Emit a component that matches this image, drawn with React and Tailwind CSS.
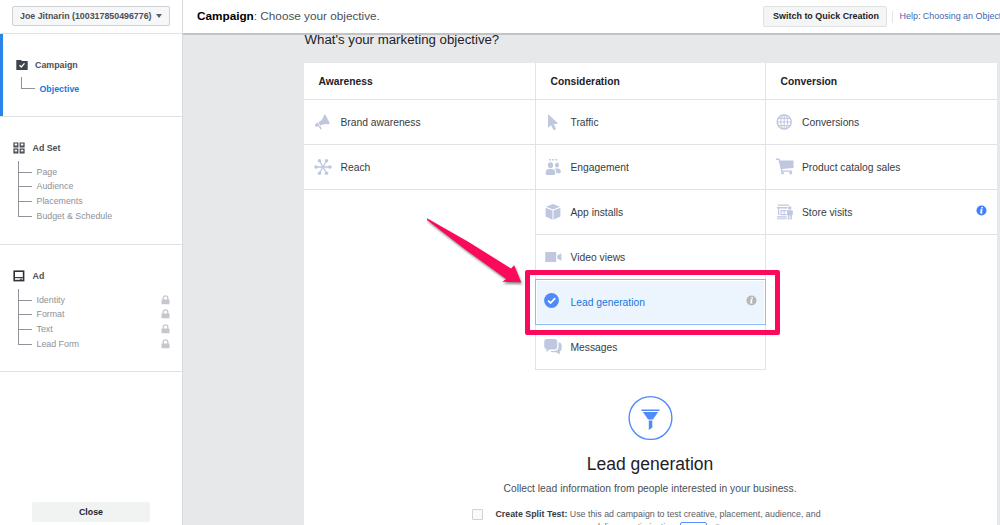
import React from 'react';

const AwarenessIcon = () => (
  <svg width="17" height="17" viewBox="0 0 17 17" className="text-[#bfc8df]" fill="currentColor">
    <path d="M10.6 0.6 Q11.6 0.8 12.2 2.2 L15.6 8.8 Q15.8 10.4 14 10.2 Q10.5 9.2 6.3 11.6 L4.3 8.2 Q8.8 5.8 9.8 1.4 Q10 0.7 10.6 0.6 Z" />
    <path d="M3.8 8.5 L5.7 11.7 L3.4 12.8 Q1.7 13.1 1 11.8 Q0.7 10.4 1.9 9.7 Z" />
    <path d="M4.6 12.6 L6.2 12 L7.8 14.8 L6.4 15.6 Z" />
  </svg>
);

const ReachIcon = () => (
  <svg width="18" height="18" viewBox="0 0 18 18" className="text-[#bfc8df]" fill="currentColor">
    <g stroke="currentColor" strokeWidth="1.3">
      <path d="M2 9H16M5.5 2.8L12.5 15.2M12.5 2.8L5.5 15.2" />
    </g>
    <circle cx="2" cy="9" r="1.8" />
    <circle cx="16" cy="9" r="1.8" />
    <circle cx="5.5" cy="2.8" r="1.8" />
    <circle cx="12.5" cy="2.8" r="1.8" />
    <circle cx="5.5" cy="15.2" r="1.8" />
    <circle cx="12.5" cy="15.2" r="1.8" />
  </svg>
);

const TrafficIcon = () => (
  <svg width="18" height="18" viewBox="0 0 18 18" className="text-[#bfc8df]" fill="currentColor">
    <path d="M4 1 V14.8 L7.2 12.2 L9.6 17.3 L12.1 16.2 L9.8 11.2 L14.2 10.6 Z" />
  </svg>
);

const EngagementIcon = () => (
  <svg width="18" height="18" viewBox="0 0 18 18" className="text-[#bfc8df]" fill="currentColor">
    <path d="M5 1h1.8v1.6H5zM8.2 1H10v1.6H8.2zM11.4 1h1.8v1.6h-1.8z" />
    <ellipse cx="6.5" cy="7.2" rx="2.6" ry="3" />
    <ellipse cx="13" cy="7" rx="2" ry="2.5" />
    <path d="M1.6 15.4 Q1.6 11 5 11 H8 Q11.4 11 11.4 15.4 Q11.4 17 9.6 17 H3.4 Q1.6 17 1.6 15.4 Z" />
    <path d="M10.6 10.6 H14 Q16.8 10.8 16.8 14 Q16.8 15.2 15.6 15.2 H12.4 Q12.4 12.4 10.6 10.6 Z" />
  </svg>
);

const AppIcon = () => (
  <svg width="18" height="18" viewBox="0 0 18 18" className="text-[#bfc8df]" fill="currentColor">
    <path d="M9 1.1 L16 3.8 L9 6.6 L2 3.8 Z" />
    <path d="M1.6 4.8 L8.5 7.6 V16.8 L1.6 13.6 Z" />
    <path d="M16.4 4.8 L9.5 7.6 V16.8 L16.4 13.6 Z" />
  </svg>
);

const VideoIcon = () => (
  <svg width="18" height="18" viewBox="0 0 18 18" className="text-[#bfc8df]" fill="currentColor">
    <rect x="1.2" y="4" width="11" height="10" rx="0.6" />
    <path d="M17.4 5.2 V12.8 L13.3 10.4 V7.6 Z" />
  </svg>
);

const CheckIcon = () => (
  <svg width="18" height="18" viewBox="0 0 18 18">
    <circle cx="7.5" cy="7.5" r="7.4" fill="#4f8af8" />
    <path d="M4.1 7.6 L6.6 10 L11.2 5.2" stroke="#fff" strokeWidth="1.8" fill="none" />
  </svg>
);

const MessagesIcon = () => (
  <svg width="18" height="18" viewBox="0 0 18 18" className="text-[#bfc8df]" fill="currentColor">
    <path d="M3 1 H10.4 Q13.2 1.2 13.2 4 V8.8 Q13 11.6 10.2 11.6 H5.6 L2.4 14 V11.2 Q0.2 10.6 0.2 8.4 V4 Q0.2 1.2 3 1 Z" />
    <path d="M14.6 4.2 Q17.6 4.8 17.6 7.4 V10.8 Q17.6 13 15.8 13.6 V16.6 L12.2 14.2 H8.6 Q7 14.2 6.4 13 H10.4 Q14.6 12.6 14.6 8.8 Z" />
  </svg>
);

const ConversionsIcon = () => (
  <svg width="18" height="18" viewBox="0 0 18 18" fill="none" className="text-[#bfc8df]" stroke="currentColor">
    <circle cx="8.2" cy="9" r="7" strokeWidth="1.5" />
    <ellipse cx="8.2" cy="9" rx="3.4" ry="7" />
    <path d="M8.2 2V16M1.2 9H15.2M2.4 5.4H14M2.4 12.6H14" />
  </svg>
);

const CartIcon = () => (
  <svg width="19" height="18" viewBox="0.5 0 19 18" className="text-[#bfc8df]" fill="currentColor">
    <path d="M0.5 0.6 H4 L4.6 2.4 H18 V10 L6.6 11 L7 12.4 H16.8 V13.8 H5.8 L3 2 H0.5 Z" />
    <circle cx="7" cy="15" r="1.4" />
    <circle cx="15.2" cy="15" r="1.4" />
  </svg>
);

const StoreIcon = () => (
  <svg width="18" height="18" viewBox="0 0 18 18" className="text-[#bfc8df]" fill="currentColor">
    <path d="M2 1.4H13V2.8H2zM1 4H11.6V5.6H1zM2 5.6H3.2V12H2zM4.4 7H10.6V8.2H5.6V11H10.6V12.2H4.4zM7.6 7H8.6V12H7.6zM1 13.2H10.8V14.4H1zM1 15.2H10.8V16.2H1z" />
    <circle cx="13.8" cy="5" r="1.7" />
    <path d="M11.4 7.2H16.2L16.8 8V12H15.8V16.6H14.3V12.6H13.4V16.6H11.9V12H11V8z" />
  </svg>
);

const InfoIcon = ({ color }) => (
  <svg width="11" height="11" viewBox="0 0 11 11">
    <circle cx="5.5" cy="5.5" r="5" fill={color} />
    <path d="M5.4 2.1H6.9V3.4H5.1zM4.3 4.3H6.6L5.9 7.6H6.5V8.6H4.1L4.7 5.3H4.1z" fill="#fff" />
  </svg>
);

const LockIcon = () => (
  <svg width="9" height="10" viewBox="0 0 9 10">
    <path d="M2.2 5V2.9Q2.2 0.9 4.5 0.9T6.8 2.9V5" fill="none" stroke="#c4c7cd" strokeWidth="1.3" />
    <rect x="0.5" y="4.4" width="8" height="4.8" rx="0.5" fill="#c4c7cd" />
  </svg>
);

const CampaignIcon = () => (
  <svg width="12" height="10" viewBox="0 0 12 10">
    <path d="M0.3 0H5L6 1H11.7V10H0.3z" fill="#3e434d" />
    <path d="M3.5 5.2L5.3 7L8.5 3.4" stroke="#fff" strokeWidth="1.3" fill="none" />
  </svg>
);

const AdSetIcon = () => (
  <svg width="12" height="12" viewBox="0 0 12 12" fill="none" stroke="#3e434d" strokeWidth="1.2">
    <path d="M1 1H4.8V4.8H1zM7.2 1H11V4.8H7.2zM1 7.2H4.8V11H1zM7.2 7.2H11V11H7.2z" />
    <path d="M1 4H4.8M7.2 4H11M1 10.2H4.8M7.2 10.2H11" />
  </svg>
);

const AdIcon = () => (
  <svg width="12" height="12" viewBox="0 0 12 12">
    <rect x="1.2" y="1.2" width="9.4" height="9.4" fill="none" stroke="#2f333c" strokeWidth="1.6" />
    <path d="M1.5 7.6H10.5" stroke="#2f333c" strokeWidth="1.1" />
    <path d="M6.8 9.2H9" stroke="#2f333c" strokeWidth="1" />
  </svg>
);

const columns = [
  {
    title: 'Awareness',
    pad: 'pl-[10px]',
    items: [
      { label: 'Brand awareness', icon: AwarenessIcon },
      { label: 'Reach', icon: ReachIcon }
    ]
  },
  {
    title: 'Consideration',
    className: 'border-x border-[#e1e3e7]',
    pad: 'pl-[8px]',
    items: [
      { label: 'Traffic', icon: TrafficIcon },
      { label: 'Engagement', icon: EngagementIcon },
      { label: 'App installs', icon: AppIcon },
      { label: 'Video views', icon: VideoIcon },
      { label: 'Lead generation', icon: CheckIcon, selected: true, info: '#b5b7ba' },
      { label: 'Messages', icon: MessagesIcon }
    ]
  },
  {
    title: 'Conversion',
    pad: 'pl-[9.5px]',
    items: [
      { label: 'Conversions', icon: ConversionsIcon },
      { label: 'Product catalog sales', icon: CartIcon },
      { label: 'Store visits', icon: StoreIcon, info: '#4080ff' }
    ]
  }
];

const Tree = ({ items, locked }) => (
  <ul className="ml-[18px] mt-[4px]">
    {items.map((item, i) => (
      <li key={item} className="flex h-[14.7px] items-end">
        <span className={`w-[14px] border-b border-l border-[#909398] ${i === 0 ? 'h-[12px]' : 'h-[15px]'}`} />
        <span className="ml-[4.5px] flex-1 translate-y-[5px] text-[8.84px] leading-[11px] text-[#8d9199]">{item}</span>
        {locked && (
          <span className="mr-[12.5px] translate-y-[4px]">
            <LockIcon />
          </span>
        )}
      </li>
    ))}
  </ul>
);

const Sidebar = () => (
  <aside className="flex h-full w-[183px] shrink-0 flex-col border-r border-[#d8dade] bg-white">
    <div className="h-[34px] border-b border-[#dfe1e4] pl-3 pt-[6px]">
      <button className="flex h-[20px] w-[158px] items-center rounded-[2px] border border-[#ced0d4] bg-[#f6f7f9] pl-[7px] text-[8.84px] font-bold text-[#4b4f56]">
        <span className="translate-y-[0.5px]">Joe Jitnarin (100317850496776)</span>
        <svg className="ml-[4px]" width="6" height="4" viewBox="0 0 6 4">
          <path d="M0 0H6L3 4z" fill="#5b6068" />
        </svg>
      </button>
    </div>
    <section className="flex h-[83px] border-b border-[#dfe1e4]">
      <span className="w-[3px] bg-[#2a85e8]" />
      <div className="pt-[25px]">
        <div className="flex h-3 items-center pl-[13px] text-[8.84px] font-bold text-[#4b4f56]">
          <CampaignIcon />
          <span className="ml-[7px] translate-y-px">Campaign</span>
        </div>
        <div className="mt-[6px] flex h-[12px] items-end pl-[18px]">
          <span className="h-[12px] w-[14px] border-b border-l border-[#909398]" />
          <span className="ml-[4.5px] translate-y-[6px] text-[8.84px] font-bold leading-[11px] text-[#1478e0]">Objective</span>
        </div>
      </div>
    </section>
    <section className="h-[128px] border-b border-[#dfe1e4] pt-[25px]">
      <div className="flex h-3 items-center pl-[13px] text-[8.84px] font-bold text-[#4b4f56]">
        <AdSetIcon />
        <span className="ml-[7.5px] translate-y-px">Ad Set</span>
      </div>
      <Tree items={['Page', 'Audience', 'Placements', 'Budget & Schedule']} />
    </section>
    <section className="h-[127px] border-b border-[#dfe1e4] pt-[25px]">
      <div className="flex h-3 items-center pl-[13px] text-[8.84px] font-bold text-[#4b4f56]">
        <AdIcon />
        <span className="ml-[7.5px] translate-y-px">Ad</span>
      </div>
      <Tree items={['Identity', 'Format', 'Text', 'Lead Form']} locked />
    </section>
    <button className="mb-[3px] ml-8 mt-auto h-[20px] w-[118px] rounded-[2px] bg-[#f1f3f3] pt-px text-[8.84px] font-bold text-[#1d2129]">
      Close
    </button>
  </aside>
);

const Header = () => (
  <header className="relative z-10 flex h-[35px] shrink-0 items-center border-b-2 border-[#c2c3c5] bg-white">
    <h1 className="ml-[14px] -translate-y-px text-[11.75px] leading-4 text-[#4b4f56]">
      <b className="text-black">Campaign</b>: Choose your objective.
    </h1>
    <button className="-mt-px ml-auto h-[21px] w-[124px] rounded-[2px] border border-[#dfe1e3] bg-[#f4f5f5] pl-[2px] pt-px text-[8.95px] font-bold text-[#1d2129]">
      Switch to Quick Creation
    </button>
    <span className="ml-[5px] h-[12px] w-px bg-[#e2e4e7]" />
    <a className="ml-[6.5px] w-[100.5px] overflow-hidden whitespace-nowrap text-[8.95px] text-[#4267b2]">
      Help: Choosing an Objective
    </a>
  </header>
);

const Objective = ({ item, pad }) => {
  const Icon = item.icon;
  return (
    <li
      className={`flex items-center ${pad} ${
        item.selected
          ? '-mx-px -mt-px h-[46px] border border-[#8dbcf0] bg-[#ecf4fd] pr-[8.5px] shadow-[inset_0_0_0_1px_#fff]'
          : 'h-[45px] border-b border-[#dfe2e6] pr-[10px]'
      }`}
    >
      <span className="flex w-[26.5px] shrink-0 items-center">
        <Icon />
      </span>
      <span
        className={`flex-1 translate-y-[0.6px] text-[10.3px] leading-3 ${item.selected ? 'text-[#1478e0]' : 'text-[#373b43]'}`}
      >
        {item.label}
      </span>
      {item.info && (
        <span className="-mt-1">
          <InfoIcon color={item.info} />
        </span>
      )}
    </li>
  );
};

const Column = ({ column }) => (
  <div className={`w-[231px] shrink-0 ${column.className || ''}`}>
    <h3 className="flex h-[37px] items-center border-b border-[#dfe2e6] pl-[14.5px] pt-px text-[10.3px] font-bold text-[#1d2129]">
      {column.title}
    </h3>
    <ul>
      {column.items.map((item) => (
        <Objective key={item.label} item={item} pad={column.pad} />
      ))}
    </ul>
  </div>
);

const Details = () => (
  <div className="flex flex-col items-center pr-px pt-[25px]">
    <svg width="46" height="46" viewBox="0 0 46 46">
      <circle cx="23.5" cy="23" r="21.4" fill="none" stroke="#4f8af8" strokeWidth="1.4" />
      <g fill="#4f8af8">
        <path d="M14.5 14.6H32.5V16H14.5zM15.9 17H31.1L25.9 24.6H21.1zM21.8 25.6H25.3V32.6L21.8 35z" />
      </g>
    </svg>
    <h2 className="mt-[11px] text-[17.5px] leading-6 text-[#1d2129]">Lead generation</h2>
    <p className="mt-[6px] text-[10.3px] leading-[14px] text-[#4b4f56]">
      Collect lead information from people interested in your business.
    </p>
    <div className="mt-[11px] flex">
      <span className="mt-[2px] h-[11px] w-[11px] rounded-[1px] border border-[#cfd2d6] bg-[#fafafa]" />
      <div className="ml-[11px] mr-[6px] w-[328px] whitespace-nowrap text-center text-[8.84px] leading-[14px] text-[#5a5e66]">
        <p>
          <b className="text-[#373b43]">Create Split Test:</b> Use this ad campaign to test creative, placement, audience, and
        </p>
        <p className="-mt-px flex items-center justify-center">
          delivery optimization.
          <span className="ml-[3px] h-[11px] rounded-[2px] border border-[#5890ff] px-[3px] text-[8px] leading-[10px] text-[#4f8af8]">NEW</span>
          <span className="ml-[7px] h-[7px] w-[7px] rounded-full border border-[#b5b7ba]" />
        </p>
      </div>
    </div>
  </div>
);

const Highlight = () => (
  <>
    <div className="absolute left-[525px] top-[270px] z-20 h-[65px] w-[255px] rounded-[2px] border-[5px] border-[#fb0a5c]" />
    <svg
      className="absolute left-[420px] top-[210px] z-20 drop-shadow-[1px_2px_1px_rgba(0,0,0,0.45)]"
      width="106"
      height="80"
      viewBox="0 0 106 80"
    >
      <path d="M7 8.2L48.6 32L91 58.5L94.2 55.3L101.2 72.3L82.2 71.7L86.2 69L45.3 39.6L7 10z" fill="#fb0a5c" />
    </svg>
  </>
);

export default function App() {
  return (
    <div className="relative flex h-[525px] w-[1000px] overflow-hidden bg-[#e7e8ea] font-['Liberation_Sans',Arial,sans-serif]">
      <Sidebar />
      <div className="flex h-full w-[817px] flex-col">
        <Header />
        <main className="flex min-h-0 flex-1 flex-col overflow-hidden pl-[121px]">
          <h2 className="-mt-[3px] ml-[0.5px] shrink-0 text-[13.25px] leading-4 text-[#1d2129]">
            What&apos;s your marketing objective?
          </h2>
          <div className="mt-[15px] w-[693px] flex-1 bg-white">
            <div className="flex h-[307px]">
              {columns.map((column) => (
                <Column key={column.title} column={column} />
              ))}
            </div>
            <Details />
          </div>
        </main>
      </div>
      <Highlight />
    </div>
  );
}
